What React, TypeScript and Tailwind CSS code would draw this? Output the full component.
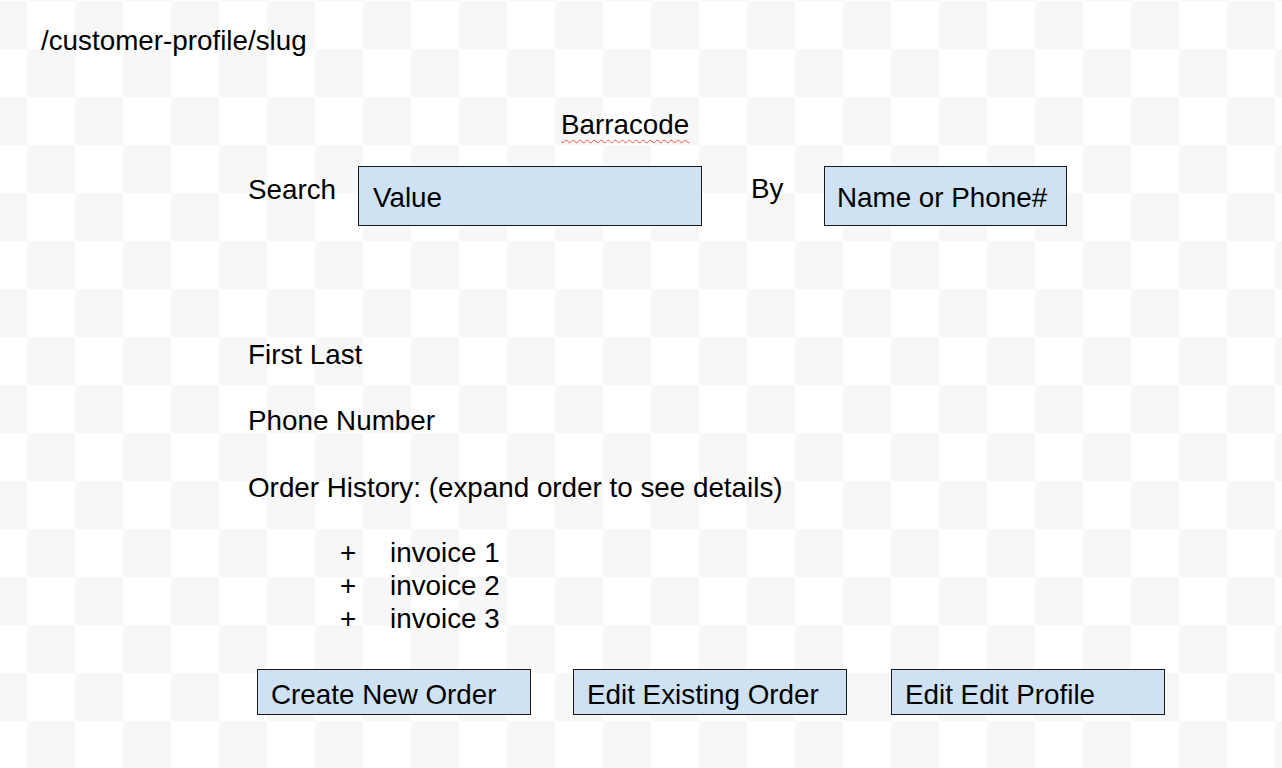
const invoices = ["invoice 1", "invoice 2", "invoice 3"];

const actions = [
  { label: "Create New Order", gap: "ml-0" },
  { label: "Edit Existing Order", gap: "ml-[42px]" },
  { label: "Edit Edit Profile", gap: "ml-[44px]" },
];

function Field({ value, className }: { value: string; className: string }) {
  return (
    <div
      className={`h-[60px] shrink-0 border border-[#1a1a1a] bg-[#cfe2f3] pt-[15px] ${className}`}
    >
      {value}
    </div>
  );
}

export default function App() {
  return (
    <div className="h-[768px] w-full overflow-hidden bg-white bg-[image:conic-gradient(#f7f7f7_0_25%,#fff_0_50%,#f7f7f7_0_75%,#fff_0)] bg-size-[96px_96px] bg-position-[27px_1px] font-['Liberation_Sans',Arial,sans-serif] text-[27.8px] leading-[32px] text-black">
      {/* Route label */}
      <div className="pl-[41px] pt-[25px]">/customer-profile/slug</div>

      <div className="ml-[248px]">
        {/* Title */}
        <div className="mt-[52px] ml-[313px]">
          <span className="underline decoration-[#e8544a] decoration-wavy decoration-1 underline-offset-[5px]">
            Barracode
          </span>
        </div>

        {/* Search row */}
        <div className="mt-[25px] flex items-start">
          <div className="mt-[8px] w-[110px] shrink-0">Search</div>
          <Field value="Value" className="w-[344px] pl-[14px]" />
          <div className="ml-[49px] mt-[7px] w-[73px] shrink-0">By</div>
          <Field value="Name or Phone#" className="w-[243px] pl-[12px]" />
        </div>

        {/* Customer */}
        <div className="mt-[113px]">First Last</div>
        <div className="mt-[34px]">Phone Number</div>
        <div className="mt-[35px]">Order History: (expand order to see details)</div>

        <ul className="mt-[32px] ml-[92px] leading-[33px]">
          {invoices.map((inv) => (
            <li key={inv} className="flex">
              <span className="w-[50px] shrink-0">+</span>
              <span>{inv}</span>
            </li>
          ))}
        </ul>

        {/* Actions */}
        <div className="mt-[34px] ml-[9px] flex">
          {actions.map((a) => (
            <button
              key={a.label}
              className={`h-[46px] w-[274px] border border-[#1a1a1a] bg-[#cfe2f3] pl-[13px] pt-[6px] text-left leading-[32px] ${a.gap}`}
            >
              <span className="block">{a.label}</span>
            </button>
          ))}
        </div>
      </div>
    </div>
  );
}
